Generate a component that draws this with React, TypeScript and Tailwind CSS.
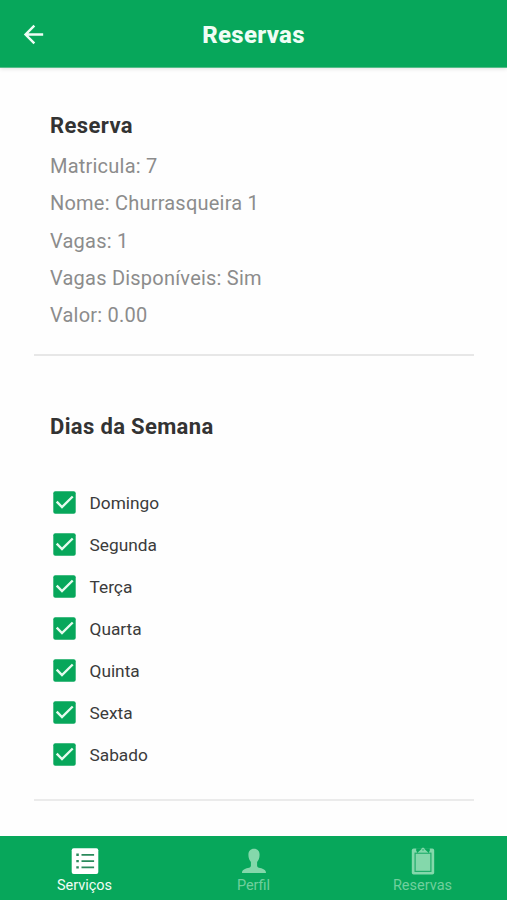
import type { ReactNode } from "react";

const details = [
  "Matricula: 7",
  "Nome: Churrasqueira 1",
  "Vagas: 1",
  "Vagas Disponíveis: Sim",
  "Valor: 0.00",
];

const days = ["Domingo", "Segunda", "Terça", "Quarta", "Quinta", "Sexta", "Sabado"];

function CheckedBox() {
  return (
    <svg width="23" height="23" viewBox="0 0 23 23" fill="none">
      <rect x="0.3" y="0.3" width="22.4" height="22.4" rx="2" fill="#07a75b" />
      <path d="M3.7 10.7L9 16L19.7 5.5" stroke="#e6fbef" strokeWidth="2.4" />
    </svg>
  );
}

function ListIcon() {
  return (
    <svg width="28" height="28" viewBox="0 0 28 28" fill="none">
      <rect x="0.7" y="1.3" width="26.6" height="25.6" rx="2" fill="#fff" />
      <path d="M10.5 7.8h12.6M10.5 14.1h12.6M10.5 20.4h12.6" stroke="#2b8a5c" strokeWidth="1.8" />
      <path d="M5.3 7.8h2.5M5.3 14.1h2.5M5.3 20.4h2.5" stroke="#2b8a5c" strokeWidth="2.4" />
    </svg>
  );
}

function PersonIcon() {
  return (
    <svg width="28" height="28" viewBox="0 0 28 28" fill="#84d8ab">
      <path d="M14 1.8c3.6 0 5.6 2.5 5.6 6 0 3-1 5.6-2.5 7.2v3.7c0 1.3 1.1 1.9 3 2.4 3.5.9 5.9 1.8 5.9 4.9H2c0-3.1 2.4-4 5.9-4.9 1.9-.5 3-1.1 3-2.4V15C9.4 13.4 8.4 10.8 8.4 7.8c0-3.500 2-6 5.600-6z" />
    </svg>
  );
}

function ClipboardIcon() {
  return (
    <svg width="28" height="28" viewBox="0 0 28 28" fill="none">
      {/* Board */}
      <rect x="2.8" y="1.6" width="22.4" height="26" rx="1.8" fill="#84d8ab" />
      <rect x="6.1" y="6.2" width="15.8" height="18.2" fill="none" stroke="#21ad6b" strokeWidth="1.2" />
      {/* Clip */}
      <path d="M7.200 1.200h13.600v2.400L19.600 6H8.400L7.200 3.600z" fill="#07a75b" />
      <path d="M8.400 5.700L12.300 2.200C12.800.4 15.200.4 15.700 2.200l3.900 3.500z" fill="#84d8ab" />
      <circle cx="14" cy="2.9" r="0.7" fill="#07a75b" />
    </svg>
  );
}

function Tab({ label, active, children }: { label: string; active?: boolean; children: ReactNode }) {
  return (
    <div
      className={
        active
          ? "flex flex-1 flex-col items-center text-[#effdf5]"
          : "flex flex-1 flex-col items-center text-[#70cf9d]"
      }
    >
      {children}
      <span className="mt-[2px] text-[14.5px] leading-[18px]">{label}</span>
    </div>
  );
}

export default function App() {
  return (
    <div className="flex h-[900px] w-[507px] flex-col overflow-hidden bg-[#fefefe] font-[Roboto,sans-serif]">
      {/* Header */}
      <header className="grid h-[68px] shrink-0 grid-cols-[1fr_auto_1fr] items-center border-b border-[#55bd89] bg-[#07a75b] pt-[2px] shadow-[0_1px_4px_rgba(0,0,0,0.12)]">
        <svg className="ml-[18.5px]" width="29" height="29" viewBox="0 0 24 24" fill="#effdf5">
          <path d="M20 11H7.83l5.59-5.59L12 4l-8 8 8 8 1.41-1.41L7.83 13H20v-2z" />
        </svg>
        <h1 className="pt-px text-[24px] font-extrabold leading-8 tracking-[0.3px] text-[#effdf5]">Reservas</h1>
      </header>

      <main className="flex-1 pl-[34px] pr-[33px]">
        {/* Reservation details */}
        <section className="h-[288px] border-b-2 border-[#e7e7e7] px-4 pt-[43px]">
          <h2 className="text-[22px] font-bold leading-[30px] tracking-[0.4px] text-[#333]">Reserva</h2>
          <ul className="mt-[6px]">
            {details.map((line) => (
              <li key={line} className="h-[37.3px] text-[20px] leading-[38px] tracking-[0.22px] text-[#8c8c8c]">
                {line}
              </li>
            ))}
          </ul>
        </section>

        {/* Week days */}
        <section className="h-[445px] border-b-2 border-[#ebebeb] px-4 pt-14">
          <h2 className="text-[22px] font-bold leading-[30px] tracking-[0.35px] text-[#333]">Dias da Semana</h2>
          <ul className="mt-10">
            {days.map((day) => (
              <li key={day} className="flex h-[41.9px] items-center gap-[13.5px] pl-[3px]">
                <CheckedBox />
                <span className="pt-px text-[17.3px] leading-6 text-[#3b3b3b]">{day}</span>
              </li>
            ))}
          </ul>
        </section>
      </main>

      {/* Bottom tabs */}
      <nav className="flex h-[64px] shrink-0 bg-[#07a75b] pt-[11px]">
        <Tab label="Serviços" active>
          <ListIcon />
        </Tab>
        <Tab label="Perfil">
          <PersonIcon />
        </Tab>
        <Tab label="Reservas">
          <ClipboardIcon />
        </Tab>
      </nav>
    </div>
  );
}
